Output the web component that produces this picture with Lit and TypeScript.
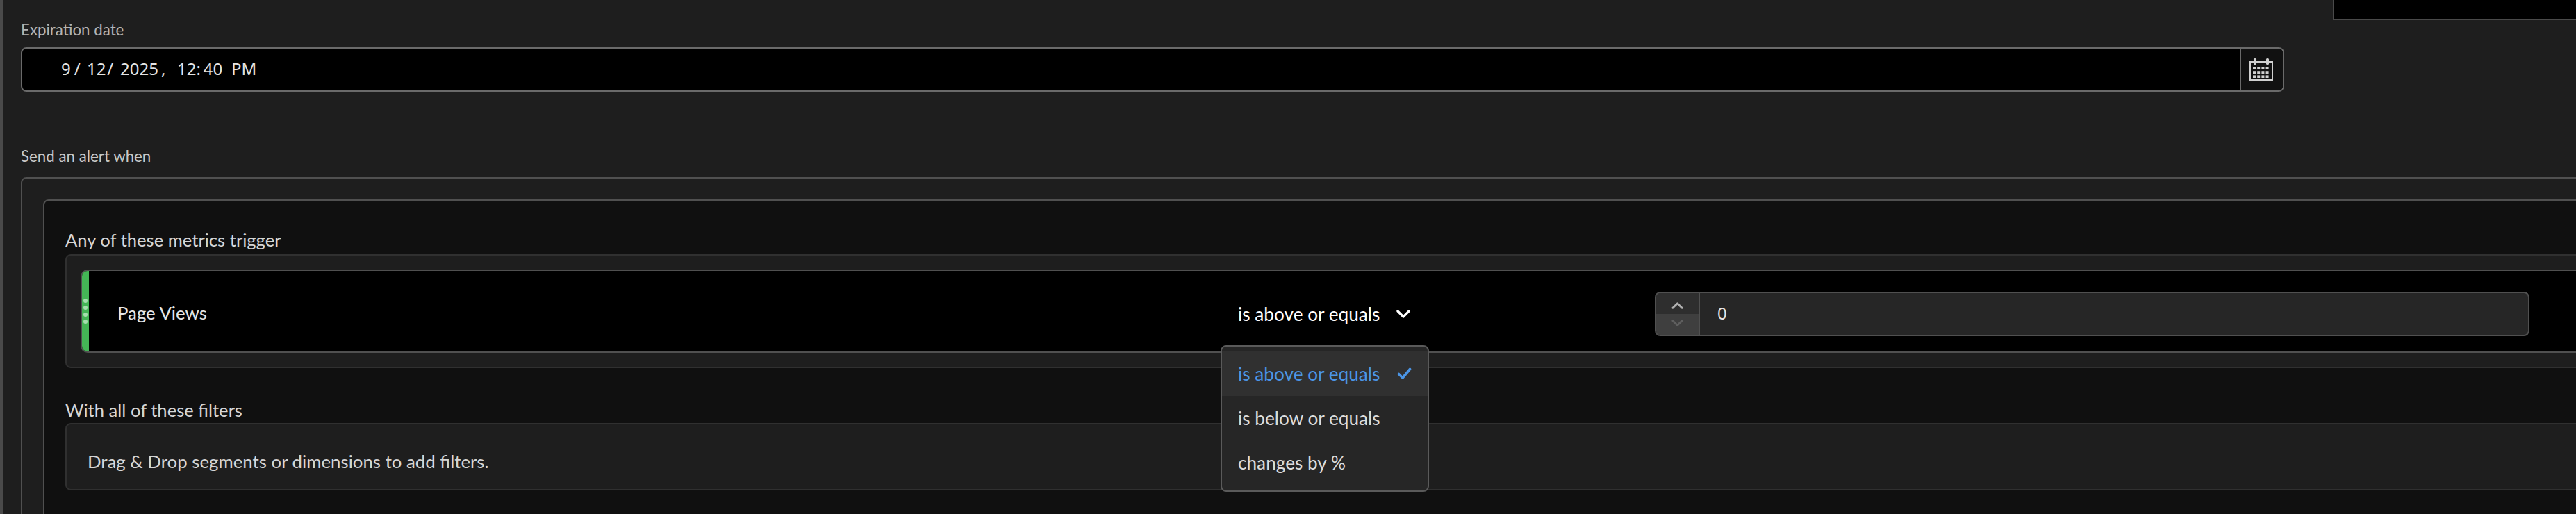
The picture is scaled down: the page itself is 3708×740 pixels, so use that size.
import { LitElement, html, css, svg } from "lit";
import { customElement } from "lit/decorators.js";

const chevron = (up: boolean, cls: string) => html`<svg class=${cls} viewBox="0 0 20 12" fill="none">
  <path d=${up ? "M2 10 10 2l8 8" : "M2 2l8 8 8-8"} stroke="currentColor" stroke-width="3.4" stroke-linecap="round" stroke-linejoin="round"></path>
</svg>`;

const calendarCells = () => {
  const out = [];
  for (let r = 0; r < 3; r++) {
    for (let c = 0; c < 4; c++) {
      out.push(svg`<rect x=${5 + c * 6.2} y=${12 + r * 6.2} width="4" height="4" fill="currentColor"></rect>`);
    }
  }
  return out;
};

// date segments and the space in front of each one
const dateParts: [string, number][] = [
  ["9", 0],
  ["/", 5],
  ["12", 9.4],
  ["/", 1.6],
  ["2025", 10],
  [",", 4],
  ["12", 16.5],
  [":", 0],
  ["40", 4],
  ["PM", 12.6],
];

@customElement("app-root")
export class AppRoot extends LitElement {
  static styles = css`
    :host {
      display: block;
      position: relative;
      box-sizing: border-box;
      width: 3708px;
      height: 740px;
      overflow: hidden;
      background: #1e1e1e;
      border-left: 4px solid #4a4a4a;
      color: #d6d6d6;
      font-family: Lato, "Open Sans", sans-serif;
    }
    .corner-panel {
      box-sizing: border-box;
      width: 350px;
      height: 29px;
      margin-left: auto;
      background: #000;
      border-left: 2px solid #4a4a4a;
      border-bottom: 2px solid #4a4a4a;
    }
    .form {
      padding-left: 26px;
    }
    .field-label {
      margin-top: 2px;
      font-size: 22.3px;
      line-height: 24px;
      color: #b4b4b4;
    }
    .date-field {
      display: flex;
      box-sizing: border-box;
      width: 3258px;
      height: 64px;
      margin-top: 13px;
      border: 2px solid #6a6a6a;
      border-radius: 8px;
      overflow: hidden;
      background: #000;
    }
    .date-value {
      flex: 1;
      display: flex;
      align-items: center;
      padding: 0 0 3px 56px;
      font-family: "Noto Sans", sans-serif;
      font-size: 24px;
      color: #e4e4e4;
    }
    .date-btn {
      display: flex;
      align-items: center;
      box-sizing: border-box;
      width: 62px;
      padding-left: 12px;
      background: #111;
      border-left: 2px solid #6a6a6a;
      color: #d0d0d0;
    }
    .date-btn svg { width: 34px; height: 32px; }
    .alert-label {
      margin-top: 81px;
      font-size: 22.3px;
      line-height: 24px;
      color: #c8c8c8;
    }
    .outer {
      box-sizing: border-box;
      width: 3800px;
      height: 500px;
      margin-top: 18px;
      padding: 30px 0 0 30px;
      border: 2px solid #505050;
      border-radius: 8px;
      background: #1e1e1e;
    }
    .inner {
      box-sizing: border-box;
      height: 460px;
      padding: 41px 0 0 30px;
      border: 2px solid #505050;
      border-radius: 8px;
      background: #101010;
    }
    .section-label {
      font-size: 25.6px;
      line-height: 30px;
      color: #d6d6d6;
    }
    .metrics {
      box-sizing: border-box;
      height: 164px;
      margin-top: 6px;
      padding: 20px 0 0 20px;
      border: 2px solid #303030;
      border-radius: 8px;
      background: #1e1e1e;
    }
    .metric-row {
      display: grid;
      grid-template-columns: 10px 1654px 600px 1259px;
      align-items: start;
      box-sizing: border-box;
      height: 120px;
      border: 2px solid #505050;
      border-radius: 10px;
      background: #000;
    }
    .grip {
      align-self: stretch;
      display: flex;
      flex-direction: column;
      align-items: center;
      justify-content: center;
      gap: 4px;
      border-radius: 8px 0 0 8px;
      background: #44b556;
    }
    .grip i {
      width: 6px;
      height: 6px;
      border-radius: 50%;
      background: #a5dfae;
    }
    .metric-name {
      margin-top: 30px;
      padding-left: 41px;
      font-size: 25.8px;
      line-height: 60px;
      color: #e6e6e6;
    }
    .condition {
      position: relative;
      display: flex;
      align-items: center;
      gap: 24px;
      height: 64px;
      margin-top: 30px;
      font-size: 26.2px;
      color: #fff;
    }
    .condition .down {
      width: 20px;
      height: 12px;
      color: #fff;
    }
    .menu {
      position: absolute;
      left: -25px;
      top: 77px;
      box-sizing: border-box;
      width: 300px;
      height: 211px;
      padding-top: 7px;
      border: 2px solid #5a5a5a;
      border-radius: 8px;
      background: #262626;
    }
    .menu-item {
      display: flex;
      align-items: center;
      justify-content: space-between;
      height: 64px;
      padding: 0 23px;
      color: #dcdcdc;
    }
    .menu-item.selected {
      background: #303030;
      color: #4b95e6;
    }
    .menu-item svg { width: 21px; height: 18px; }
    .threshold {
      display: flex;
      box-sizing: border-box;
      height: 64px;
      margin-top: 30px;
      border: 2px solid #505050;
      border-radius: 8px;
      overflow: hidden;
      background: #262626;
    }
    .stepper {
      display: flex;
      flex-direction: column;
      box-sizing: border-box;
      width: 63px;
      border-right: 2px solid #505050;
    }
    .stepper div {
      box-sizing: border-box;
      height: 30px;
      display: flex;
      align-items: center;
      justify-content: center;
    }
    .stepper .inc { padding-top: 5px; background: #2e2e2e; color: #b0b0b0; }
    .stepper .dec { padding-bottom: 5px; background: #3f3f3f; color: #5f5f5f; }
    .stepper svg { width: 17px; height: 10px; }
    .threshold-value {
      padding-left: 25px;
      font-family: "Noto Sans", sans-serif;
      font-size: 24px;
      line-height: 58px;
      color: #e4e4e4;
    }
    .filters-label {
      margin-top: 45px;
    }
    .filters {
      box-sizing: border-box;
      height: 97px;
      margin-top: 4px;
      padding: 38px 0 0 30px;
      border: 2px solid #303030;
      border-radius: 8px;
      background: #1e1e1e;
      font-size: 25.8px;
      line-height: 30px;
      color: #d6d6d6;
    }
  `;

  render() {
    return html`
      <div class="corner-panel"></div>
      <div class="form">
        <div class="field-label">Expiration date</div>
        <div class="date-field">
          <div class="date-value">
            ${dateParts.map(([t, gap]) => html`<span style="margin-left:${gap}px">${t}</span>`)}
          </div>
          <div class="date-btn">
            <svg viewBox="0 0 34 32" fill="none">
              <rect x="1" y="5" width="32" height="26" stroke="currentColor" stroke-width="2"></rect>
              <rect x="6" y="0" width="4" height="9" rx="1.5" fill="currentColor"></rect>
              <rect x="24" y="0" width="4" height="9" rx="1.5" fill="currentColor"></rect>
              ${calendarCells()}
            </svg>
          </div>
        </div>
        <div class="alert-label">Send an alert when</div>
        <div class="outer">
          <div class="inner">
            <div class="section-label">Any of these metrics trigger</div>
            <div class="metrics">
              <div class="metric-row">
                <div class="grip"><i></i><i></i><i></i><i></i></div>
                <div class="metric-name">Page Views</div>
                <div class="condition">
                  <span>is above or equals</span>
                  ${chevron(false, "down")}
                  <div class="menu">
                    <div class="menu-item selected">
                      <span>is above or equals</span>
                      <svg viewBox="0 0 21 18" fill="none">
                        <path d="M2.5 9.5 8 15 18.5 2.5" stroke="currentColor" stroke-width="3.6" stroke-linecap="round" stroke-linejoin="round"></path>
                      </svg>
                    </div>
                    <div class="menu-item"><span>is below or equals</span></div>
                    <div class="menu-item"><span>changes by %</span></div>
                  </div>
                </div>
                <div class="threshold">
                  <div class="stepper">
                    <div class="inc">${chevron(true, "")}</div>
                    <div class="dec">${chevron(false, "")}</div>
                  </div>
                  <div class="threshold-value">0</div>
                </div>
              </div>
            </div>
            <div class="section-label filters-label">With all of these filters</div>
            <div class="filters">Drag &amp; Drop segments or dimensions to add filters.</div>
          </div>
        </div>
      </div>
    `;
  }
}
